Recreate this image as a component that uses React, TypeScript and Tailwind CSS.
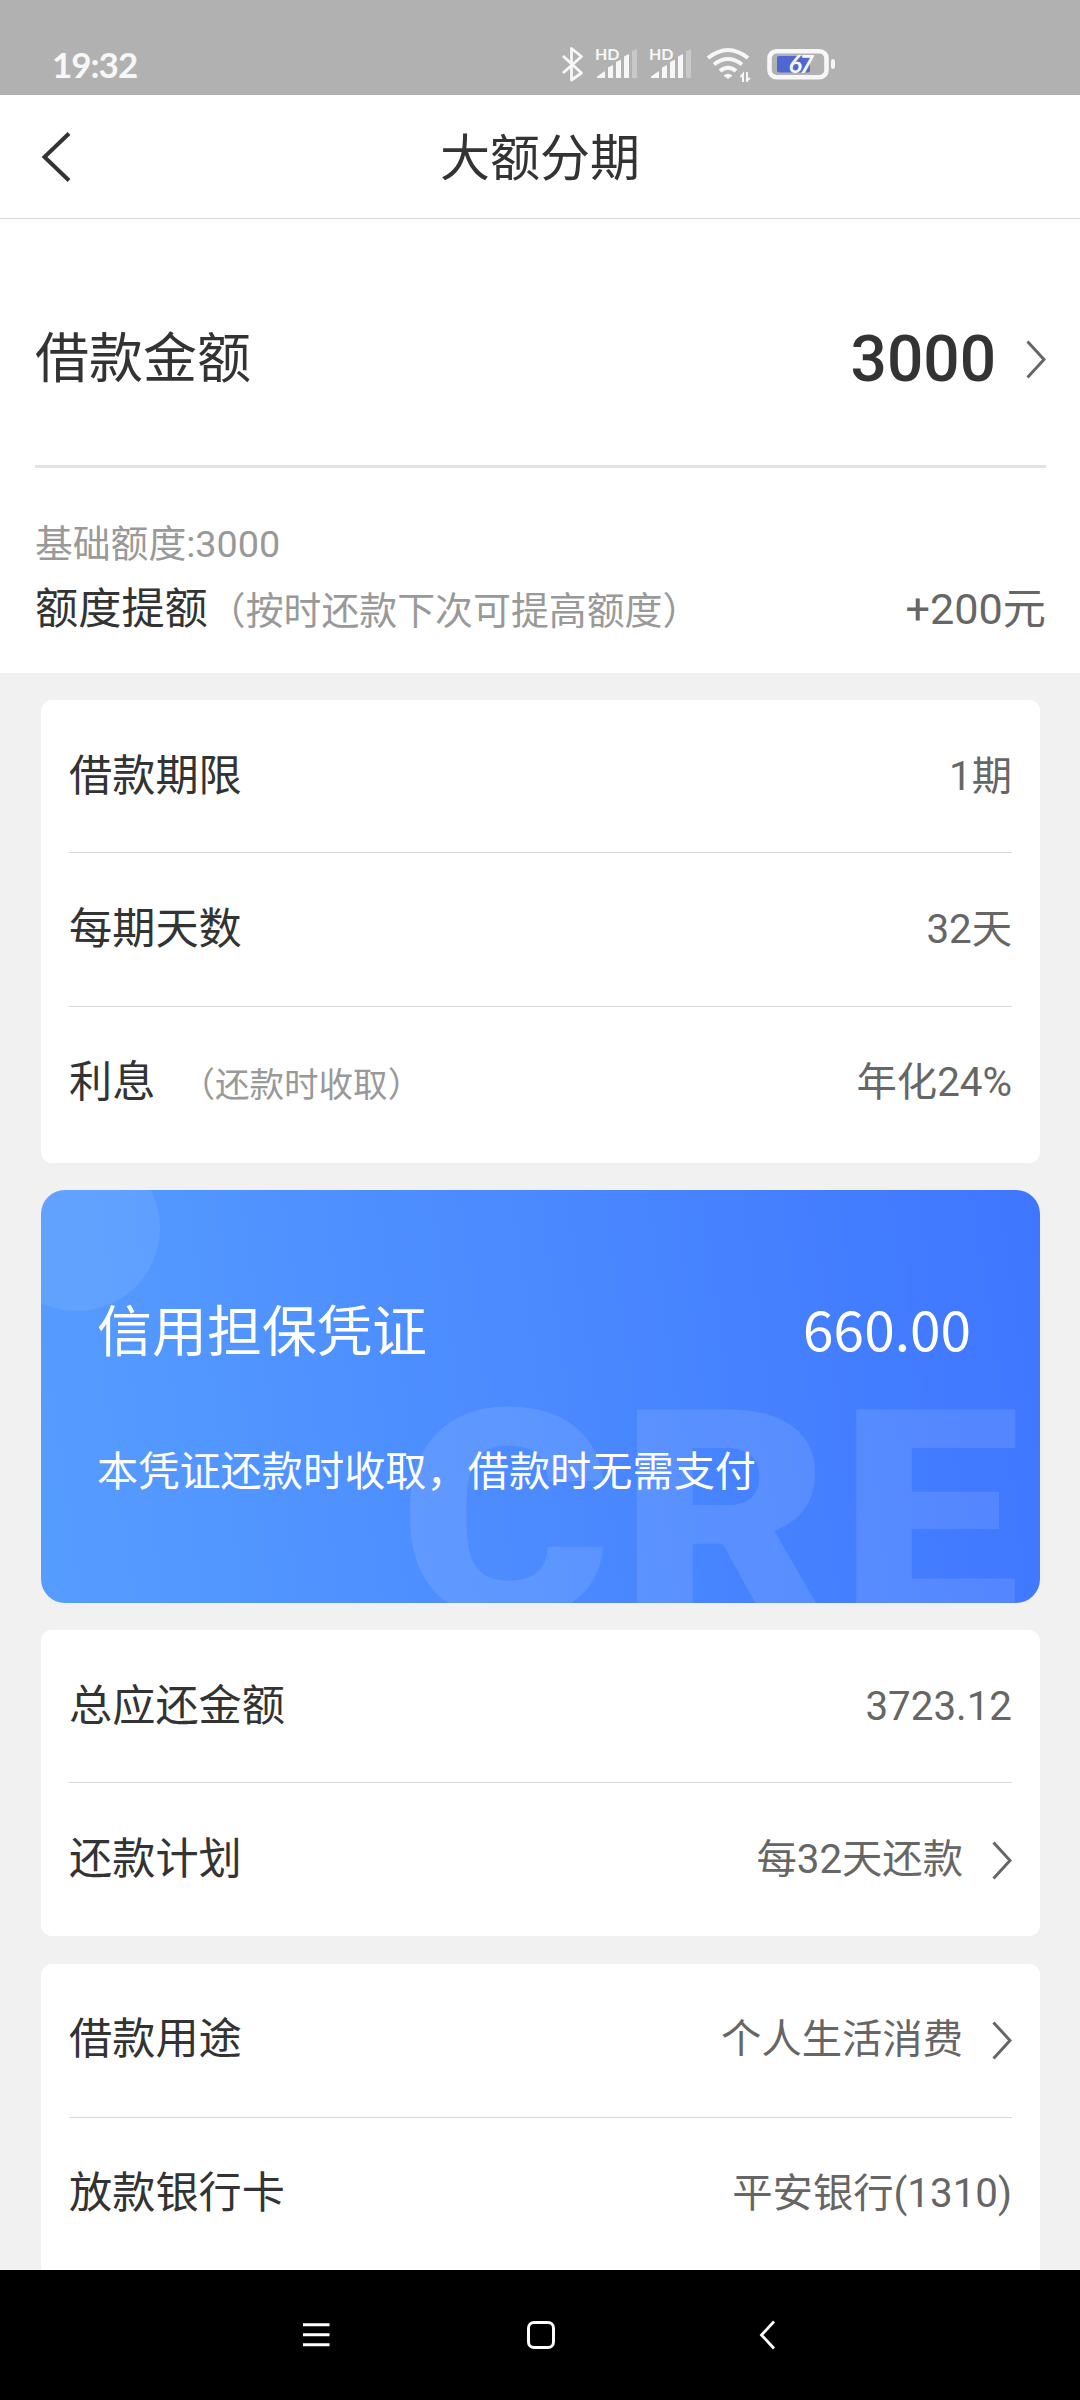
import type { ReactNode } from 'react'
import { clsx } from 'clsx'

interface RowProps {
  label: string
  note?: string
  value: string
  arrow?: boolean
  divider?: boolean
  className?: string
}

function ArrowRight() {
  return (
    <svg width="20" height="40" viewBox="0 0 20 40" fill="none" className="shrink-0">
      <path d="M1.5 1.5 L18 19.5 L1.5 37.5" stroke="#666" strokeWidth="3" />
    </svg>
  )
}

function Row({ label, note, value, arrow, divider, className = 'h-[153px] pt-[2px]' }: RowProps) {
  return (
    <div
      className={clsx(
        'flex items-center justify-between',
        divider && 'border-b border-[#d9d9d9]',
        className,
      )}
    >
      <div className="flex items-baseline">
        <span className="text-[43.2px] text-[#333]">{label}</span>
        {note && <span className="ml-[25px] text-[34.56px] text-[#999]">{note}</span>}
      </div>
      <div className="flex items-center gap-[29px] text-[40.32px] text-[#666]">
        <span>{value}</span>
        {arrow && <ArrowRight />}
      </div>
    </div>
  )
}

function Card({ children }: { children: ReactNode }) {
  return <section className="flow-root shrink-0 rounded-[11px] bg-white px-7">{children}</section>
}

function Signal() {
  return (
    <svg width="54" height="40" viewBox="0 0 54 40" fill="#f7f7f7">
      <text x="1" y="14.5" fontSize="16" fontWeight="700" fontFamily="Lato, sans-serif" letterSpacing="-0.2">
        HD
      </text>
      <path d="M3 33 V31.5 L11 26 V33 Z" />
      <path d="M14 33 V22.5 L19 20 V33 Z" />
      <path d="M22 33 V17 L27 14.5 V33 Z" />
      <path d="M30 33 V11.5 L35 9 V33 Z" />
      <path d="M38 33 V6 L43 4 V33 Z" fill="#c8c8c8" />
    </svg>
  )
}

function StatusBar() {
  return (
    <header className="flex h-[95px] items-start bg-[#b1b1b1] pt-[45px] font-[Lato,sans-serif]">
      <span className="-mt-px ml-[52px] w-[508px] text-[35px] leading-[40px] font-bold tracking-[-1px] text-[#f7f7f7]">
        19:32
      </span>
      <svg width="34" height="40" viewBox="0 0 34 40" fill="none">
        <path
          d="M3 11 L21.5 28 L11.5 35 V3.5 L21.5 11.5 L3 28"
          stroke="#f7f7f7"
          strokeWidth="2.8"
          strokeLinejoin="round"
        />
      </svg>
      <Signal />
      <Signal />
      <svg width="59" height="40" viewBox="0 0 59 40" fill="none" stroke="#f7f7f7" strokeWidth="4">
        <path d="M6 13 Q26 -3 46 13" />
        <path d="M12 19.5 Q26 8.5 40 19.5" />
        <path d="M18 26 Q26 19.5 34 26" />
        <path d="M21.5 30.5 Q26 27 30.5 30.5 L26 34 Z" fill="#f7f7f7" stroke="none" />
        <path d="M41 37 V29 L38.5 32" strokeWidth="2" />
        <path d="M45 27 V37 M45 35.5 L48 33" strokeWidth="2" />
      </svg>
      <svg width="75" height="40" viewBox="0 0 75 40">
        <rect x="8.5" y="6.2" width="57" height="26" rx="7" fill="none" stroke="#f7f7f7" strokeWidth="4.6" />
        <rect x="16" y="11" width="33" height="16.5" rx="2" fill="#4f66d3" />
        <rect x="70" y="14" width="4" height="10" rx="2" fill="#f7f7f7" />
        <text
          x="27.5"
          y="28"
          fontSize="25"
          fontWeight="700"
          fontStyle="italic"
          fontFamily="Lato, sans-serif"
          letterSpacing="-2.4"
          fill="#f7f7f7"
        >
          67
        </text>
      </svg>
    </header>
  )
}

function TitleBar() {
  return (
    <nav className="grid h-[124px] grid-cols-[1fr_auto_1fr] items-center border-b border-[#dadada] bg-white">
      <svg width="34" height="52" viewBox="0 0 34 52" fill="none" className="ml-10">
        <path d="M29 2.5 L4.5 26 L29 49.5" stroke="#333" strokeWidth="4" />
      </svg>
      <h1 className="pt-[5px] text-[50px] text-[#333]">大额分期</h1>
    </nav>
  )
}

function AmountPanel() {
  return (
    <section className="h-[454px] bg-white pr-[34px] pl-[35px]">
      <div className="flex h-[249px] items-center justify-between border-b-3 border-[#e3e3e3] pt-[35px]">
        <span className="text-[54px] text-[#333]">借款金额</span>
        <div className="flex items-center gap-[30px]">
          <span className="text-[64px] font-medium text-[#333]">3000</span>
          <ArrowRight />
        </div>
      </div>
      <p className="mt-[50px] text-[37.8px] leading-[52px] text-[#999]">基础额度:3000</p>
      <div className="flex items-baseline justify-between leading-[80px]">
        <p>
          <span className="text-[43.2px] text-[#333]">额度提额</span>
          <span className="text-[37.9px] text-[#999]">（按时还款下次可提高额度）</span>
        </p>
        <span className="text-[43.2px] text-[#666]">+200元</span>
      </div>
    </section>
  )
}

function VoucherCard() {
  return (
    <section className="relative h-[413px] shrink-0 overflow-hidden rounded-[24px] bg-[linear-gradient(82deg,#569dff,#3f76ff)] px-14 font-['Noto_Sans_CJK_SC',sans-serif] text-white">
      <div className="absolute -top-[45px] -left-[47px] size-[166px] rounded-full bg-white/8" />
      <span
        aria-hidden="true"
        className="absolute top-[156px] left-[358px] origin-left scale-x-[1.11] font-[Roboto,sans-serif] text-[292px] leading-[342px] font-black tracking-[7px] text-white/10"
      >
        CRE
      </span>
      <div className="relative flex items-center justify-between pt-[97px] pr-[13px] text-[55px] leading-[80px]">
        <span>信用担保凭证</span>
        <span>660.00</span>
      </div>
      <p className="relative mt-[71px] text-[41.2px] leading-[60px]">
        本凭证还款时收取，借款时无需支付
      </p>
    </section>
  )
}

function SystemNav() {
  return (
    <footer className="flex h-[130px] items-center bg-black">
      <svg width="28" height="30" viewBox="0 0 28 30" stroke="#fff" strokeWidth="3" className="ml-[303px]">
        <path d="M0 4.7 H26.5 M0 14.7 H26.5 M0 24.7 H26.5" />
      </svg>
      <div className="ml-[196px] size-7 rounded-[7px] border-3 border-white" />
      <svg width="18" height="30" viewBox="0 0 18 30" fill="none" stroke="#fff" strokeWidth="2.8" className="ml-[203px]">
        <path d="M16 1.5 L3.5 15 L16 28.5" />
      </svg>
    </footer>
  )
}

export default function App() {
  return (
    <div className="flex h-[2400px] w-[1080px] flex-col overflow-hidden bg-[#f1f1f1] font-[Roboto,'Noto_Sans_CJK_SC',sans-serif]">
      <StatusBar />
      <TitleBar />
      <AmountPanel />
      <main className="flex h-[1597px] flex-col gap-[27px] overflow-hidden pt-[27px] pr-10 pl-[41px]">
        <Card>
          <Row label="借款期限" value="1期" divider />
          <Row label="每期天数" value="32天" divider className="h-[154px] pt-px" />
          <Row label="利息" note="（还款时收取）" value="年化24%" className="mb-[3px] h-[153px]" />
        </Card>
        <VoucherCard />
        <Card>
          <Row label="总应还金额" value="3723.12" divider />
          <Row label="还款计划" value="每32天还款" arrow />
        </Card>
        <div className="mt-px">
          <Card>
            <Row label="借款用途" value="个人生活消费" arrow divider className="h-[154px]" />
            <Row label="放款银行卡" value="平安银行(1310)" className="mb-7 h-[153px]" />
          </Card>
        </div>
      </main>
      <SystemNav />
    </div>
  )
}
